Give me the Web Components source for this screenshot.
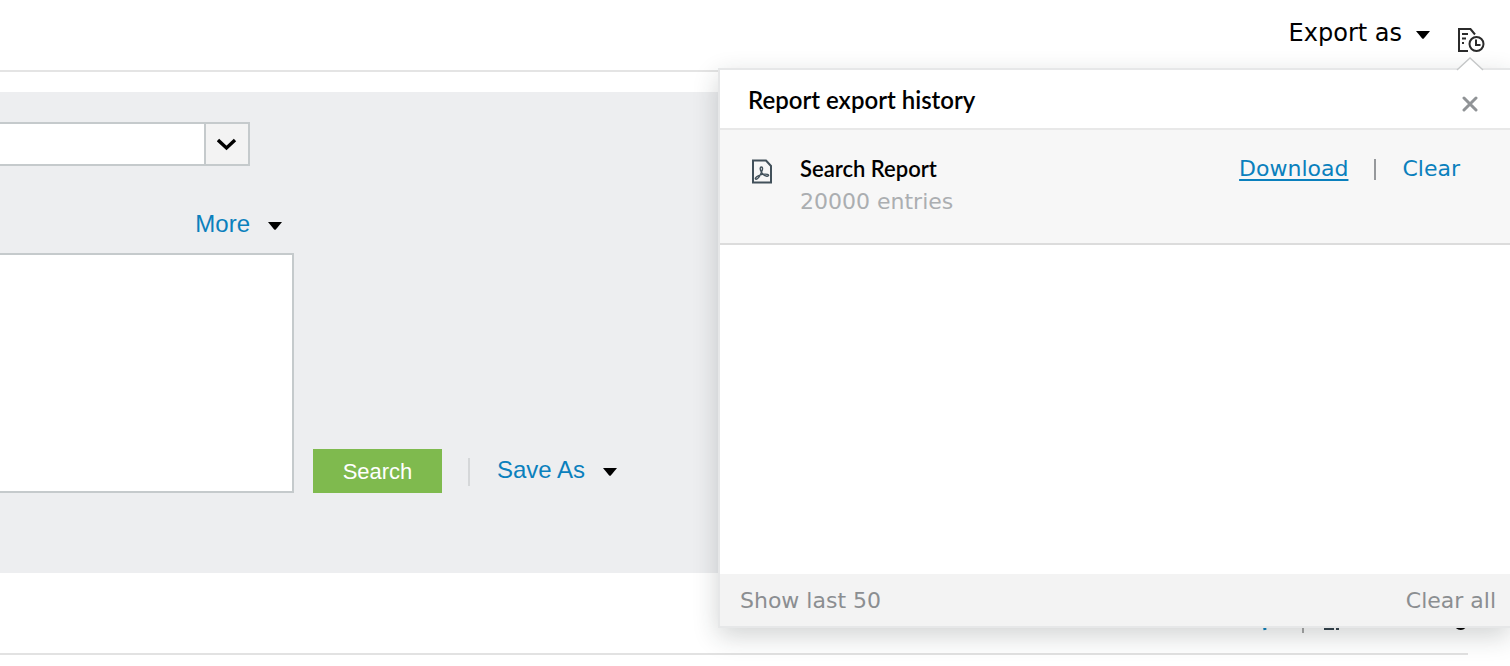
<!DOCTYPE html>
<html lang="en">
<head>
<meta charset="utf-8">
<title>Search report</title>
<style>
html, body { margin: 0; min-height: 100%; background: #fff; }
body { font-family: "Liberation Sans", Arial, sans-serif; color: #000; overflow-x: hidden; }
</style>
</head>
<body>
<report-page></report-page>
<script>
const define = (name, html, setup) => customElements.define(name, class extends HTMLElement {
  constructor() {
    super();
    const root = this.attachShadow({ mode: 'open' });
    root.innerHTML = html;
    if (setup) setup.call(this, root);
  }
});

define('menu-button', `
<style>
:host { display: block; }
button { display: flex; align-items: center; gap: var(--menu-gap, 18px); border: 0; padding: 0; background: none;
  color: inherit; font: inherit; line-height: 32px; cursor: pointer; white-space: nowrap; }
svg { display: block; fill: #000; margin-top: 4px; }
</style>
<button type="button" aria-haspopup="menu"><slot></slot><svg width="14" height="8" viewBox="0 0 14 8" aria-hidden="true"><path d="M0 0H14L7.8 7.4Q7 8.2 6.2 7.4Z"/></svg></button>`);

define('page-header', `
<style>
:host { display: block; border-bottom: 2px solid #e4e4e4; font-family: "DejaVu Sans", Verdana, sans-serif; }
header { display: flex; justify-content: flex-end; align-items: flex-start; gap: 28px; height: 53px; padding: 17px 25px 0 0; font-size: 24px; }
menu-button { --menu-gap: 14px; }
.history { position: relative; margin-top: 10px; border: 0; padding: 0; background: none; cursor: pointer; }
svg { display: block; }
</style>
<header>
  <menu-button>Export as</menu-button>
  <button class="history" type="button" aria-label="Report export history">
    <svg width="27" height="26" viewBox="0 0 27 26" fill="none" stroke="#2b2b2b" stroke-width="2">
      <path d="M10 24H1V2H12.5L17 7.5M4 7H10M4 11.5H8M4 16H6"/>
      <circle cx="18.5" cy="17" r="7"/><path d="M18 12.5V18H22.5"/>
    </svg>
  </button>
</header>`);

define('combo-select', `
<style>
:host { display: block; position: relative; width: 250px; }
select { display: block; box-sizing: border-box; width: 100%; height: 44px; appearance: none; border: 2px solid #c5cacc; border-left: 0; border-radius: 0; background: #fff; padding: 0 54px 0 12px; font-size: 22px; }
span { position: absolute; top: 2px; right: 2px; bottom: 2px; width: 42px; border-left: 2px solid #c5cacc; background: #f3f3f3; display: grid; place-items: center; pointer-events: none; }
</style>
<select aria-label="Search field"><option></option></select>
<span><svg width="20" height="14" viewBox="0 0 20 14" fill="none" stroke="#000" stroke-width="3.4"><path d="M1 3L9.500 11L18 3"/></svg></span>`);

define('search-form', `
<style>
:host { display: block; margin-top: 20px; background: #edeef0; padding: 30px 0 80px; }
.more { display: flex; justify-content: flex-end; width: 282px; margin: 42px 0 13px; }
menu-button { color: #0a80bd; font-size: 24px; }
.row { display: flex; align-items: flex-end; }
textarea { display: block; box-sizing: border-box; width: 294px; height: 240px; border: 2px solid #c5cacc; border-left: 0; margin: 0; resize: none; background: #fff; font: 22px "Liberation Sans", sans-serif; }
.go { margin-left: 19px; width: 129px; height: 44px; border: 0; padding: 2px 0 0; background: #7fba4e; color: #fff; font: 22px "Liberation Sans", Arial, sans-serif; }
i { width: 2px; height: 28px; margin: 0 27px 7px 26px; background: #d5d7d9; }
.row menu-button { margin-bottom: 7px; }
</style>
<form>
  <combo-select></combo-select>
  <div class="more"><menu-button>More</menu-button></div>
  <div class="row"><textarea aria-label="Search criteria"></textarea><button class="go" type="button">Search</button><i></i><menu-button>Save As</menu-button></div>
</form>`);

define('results-bar', `
<style>
:host { display: flex; justify-content: flex-end; align-items: flex-end; box-sizing: border-box; height: 82px; margin-right: 42px; border-bottom: 2px solid #e2e2e2; }
svg { display: block; margin-bottom: 20px; }
</style>
<svg width="210" height="24" viewBox="0 0 210 24" aria-hidden="true">
  <path d="M5 4L7 21" stroke="#0a80bd" stroke-width="3"/>
  <path d="M45 0V24" stroke="#a8a8a8" stroke-width="2"/>
  <path d="M67 2V20H76M78 20H81" fill="none" stroke="#34434d" stroke-width="2"/>
  <path d="M198 18Q203 22 207 18" fill="none" stroke="#000" stroke-width="2"/>
</svg>`);

define('export-entry', `
<style>
:host { display: flex; align-items: flex-start; box-sizing: border-box; height: 115px; padding: 24px 50px 0 32px; background: #f7f7f7; border-bottom: 2px solid #dcdcdc; }
svg { display: block; margin-top: 5px; flex: none; }
.text { flex: 1; margin-left: 28px; }
h3 { margin: 0; font: 600 22px/30px Lato, sans-serif; }
p { margin: 2px 0 0; font-size: 22px; line-height: 32px; color: #abaeb1; }
nav { display: flex; font-size: 22px; line-height: 30px; }
a { color: #0a80bd; text-decoration: none; }
a.down { text-decoration: underline; text-decoration-thickness: 2px; text-underline-offset: 3px; }
i { width: 2px; height: 21px; margin: 5px 26px 0 26px; background: #96999c; }
</style>
<svg width="20" height="25" viewBox="0 0 20 25" fill="none" stroke="#42515b" aria-hidden="true">
  <path d="M1 1.5H14L19 7V23.5H1Z" stroke-width="2"/>
  <path d="M9.2 12.5C7.8 10.5 7.8 8 9.4 8S10.8 10.5 9.6 12.8C8.4 17 5.6 20.5 4 20.2S3.8 17.8 6.2 16.8C10 15.2 13.5 14.8 15.4 15.4S16.8 17.4 14.8 17.2C12.4 17 10.2 15 9.2 12.5Z" stroke-width="1.4"/>
</svg>
<div class="text"><h3><slot name="name"></slot></h3><p><slot name="count"></slot></p></div>
<nav><a class="down" href="#download">Download</a><i></i><a href="#clear">Clear</a></nav>`);

define('history-panel', `
<style>
:host { position: absolute; top: 68px; right: 0; box-sizing: border-box; width: 792px; display: flex; flex-direction: column; min-height: 560px;
  border: 2px solid #e6e7e8; border-right: 0; background: #fff; box-shadow: 0 8px 24px rgba(30,40,40,.2); font-family: "DejaVu Sans", Verdana, sans-serif; }
.tip { position: absolute; top: -13px; right: 26px; display: block; }
header { display: flex; justify-content: space-between; height: 58px; padding: 0 32px 0 28px; border-bottom: 2px solid #e8e8e8; }
h2 { margin: 0; font: 600 24px/60px Lato, sans-serif; }
.close { margin-top: 10px; border: 0; padding: 0; background: none; }
.close svg { display: block; }
.list { flex: 1; }
footer { display: flex; justify-content: space-between; height: 52px; padding: 0 14px 0 20px; background: #f3f3f3; font-size: 22px; line-height: 54px; }
a { color: #8b8e91; text-decoration: none; }
</style>
<svg class="tip" width="28" height="14" viewBox="0 0 28 14" aria-hidden="true"><path d="M0 14L14 .5L28 14Z" fill="#fff"/><path d="M1 13L14 1L27 13" fill="none" stroke="#c5c7c8" stroke-width="1.4"/></svg>
<header><h2>Report export history</h2><button class="close" type="button" aria-label="Close"><svg width="16" height="16" viewBox="0 0 16 16"><path d="M2 2L14 14M14 2L2 14" stroke="#909396" stroke-width="3" stroke-linecap="round"/></svg></button></header>
<div class="list"><slot></slot></div>
<footer><a href="#last">Show last 50</a><a href="#clear-all">Clear all</a></footer>`);

define('report-page', `
<style>:host { display: block; position: relative; padding-bottom: 11px; }</style>
<page-header></page-header>
<search-form></search-form>
<results-bar></results-bar>
<history-panel><export-entry><span slot="name">Search Report</span><span slot="count">20000 entries</span></export-entry></history-panel>`);
</script>
</body>
</html>
